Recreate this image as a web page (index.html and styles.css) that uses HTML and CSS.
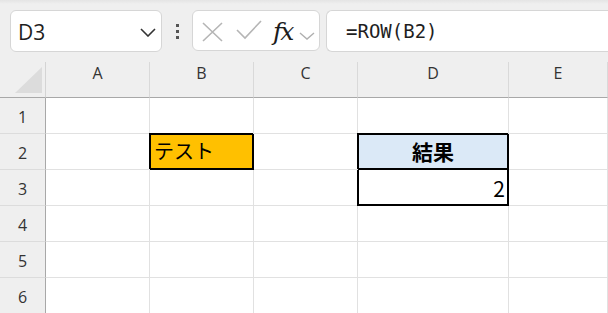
FILE: index.html
```html
<!DOCTYPE html>
<html lang="ja">
<head>
    <meta charset="UTF-8">
    <meta name="viewport" content="width=device-width, initial-scale=1.0">
    <title>ROW</title>
    <link rel="stylesheet" href="styles.css">
</head>
<body>
    <div class="toolbar">
        <div class="namebox">
            <span class="name">D3</span>
            <svg class="chev" width="16" height="9" viewBox="0 0 16 9"><polyline points="1,1 8,8 15,1" fill="none" stroke="#333" stroke-width="1.6"/></svg>
        </div>
        <div class="dots"><i></i><i></i><i></i></div>
        <div class="fx-tools">
            <svg class="icon-x" width="21" height="20" viewBox="0 0 21 20"><path d="M1 1 L20 19 M20 1 L1 19" stroke="#b5b5b5" stroke-width="1.6" fill="none"/></svg>
            <svg class="icon-ok" width="26" height="20" viewBox="0 0 26 20"><polyline points="1,10 9,18 25,1" fill="none" stroke="#b5b5b5" stroke-width="1.6"/></svg>
            <span class="fx">fx</span>
            <svg class="chev-sm" width="16" height="8" viewBox="0 0 16 8"><polyline points="1,1 8,7 15,1" fill="none" stroke="#b0b0b0" stroke-width="1.4"/></svg>
        </div>
        <div class="formula">=ROW(B2)</div>
    </div>

    <div class="sheet">
        <!-- header row -->
        <div class="cell corner"><svg width="27" height="26" viewBox="0 0 27 26"><polygon points="27,0 27,26 0,26" fill="#dcdcdc"/></svg></div>
        <div class="cell col-head">A</div>
        <div class="cell col-head">B</div>
        <div class="cell col-head">C</div>
        <div class="cell col-head">D</div>
        <div class="cell col-head">E</div>

        <div class="cell row-head">1</div>
        <div class="cell"></div><div class="cell"></div><div class="cell"></div><div class="cell"></div><div class="cell"></div>

        <div class="cell row-head">2</div>
        <div class="cell"></div>
        <div class="cell text boxed amber">テスト</div>
        <div class="cell"></div>
        <div class="cell text boxed blue">結果</div>
        <div class="cell"></div>

        <div class="cell row-head">3</div>
        <div class="cell"></div><div class="cell"></div><div class="cell"></div>
        <div class="cell text boxed-under num">2</div>
        <div class="cell"></div>

        <div class="cell row-head">4</div>
        <div class="cell"></div><div class="cell"></div><div class="cell"></div><div class="cell"></div><div class="cell"></div>

        <div class="cell row-head">5</div>
        <div class="cell"></div><div class="cell"></div><div class="cell"></div><div class="cell"></div><div class="cell"></div>

        <div class="cell row-head">6</div>
        <div class="cell"></div><div class="cell"></div><div class="cell"></div><div class="cell"></div><div class="cell"></div>
    </div>
</body>
</html>
```

FILE: styles.css
```css
* {
    box-sizing: border-box;
}

body {
    margin: 0;
    width: 608px;
    height: 313px;
    overflow: hidden;
    background: #efefef;
    font-family: "Open Sans", "Noto Sans", sans-serif;
    color: #222;
}

.toolbar {
    height: 62px;
    padding: 10px 0 0 10px;
    display: flex;
    align-items: flex-start;
    background: linear-gradient(#e4e4e4, #efefef 4px);
}

.toolbar > * {
    flex-shrink: 0;
}

.namebox {
    width: 152px;
    height: 42px;
    background: #fff;
    border: 1px solid #d6d6d6;
    border-radius: 6px;
    display: flex;
    align-items: center;
    padding: 0 5px 0 7px;
}

.name {
    flex: 1;
    font-size: 21px;
    color: #1f1f1f;
    padding-top: 1px;
}

.chev {
    margin-top: 2px;
}

.dots {
    width: 30px;
    height: 42px;
    display: flex;
    flex-direction: column;
    align-items: center;
    justify-content: center;
    gap: 3px;
}

.dots i {
    width: 3px;
    height: 3px;
    background: #555;
}

.fx-tools {
    width: 128px;
    height: 41px;
    background: #fff;
    border: 1px solid #d6d6d6;
    border-radius: 6px;
    display: flex;
    align-items: center;
    padding-left: 9px;
    margin-right: 6px;
}

.icon-x {
    margin-top: 2px;
}

.icon-ok {
    margin-left: 13px;
    margin-top: -2px;
}

.fx {
    font-family: "DejaVu Serif", serif;
    font-style: italic;
    font-size: 25px;
    color: #1c1c1c;
    margin-left: 11px;
    letter-spacing: -2px;
    margin-top: 1px;
}

.chev-sm {
    margin-left: 7px;
    margin-top: 10px;
}

.formula {
    flex: 1 0 0;
    height: 42px;
    background: #fff;
    border: 1px solid #d6d6d6;
    border-right: none;
    border-radius: 6px 0 0 6px;
    padding: 0 0 0 19px;
    font-family: "DejaVu Sans Mono", monospace;
    font-size: 19px;
    line-height: 40px;
    color: #1f1f1f;
}

.sheet {
    display: grid;
    grid-template-columns: 46px 104px 104px 104px 151px 1fr;
    grid-auto-rows: 36px;
    background: #fff;
}

.cell {
    border-right: 1px solid #e1e1e1;
    border-bottom: 1px solid #e1e1e1;
    display: flex;
    align-items: center;
}

.corner {
    background: #efefef;
    border-right: 1px solid #d4d4d4;
    border-bottom: 1px solid #a8a8a8;
    align-items: flex-end;
    justify-content: flex-end;
    padding: 0 3px 4px 0;
}

.col-head {
    background: #efefef;
    border-right: 1px solid #d9d9d9;
    border-bottom: 1px solid #a8a8a8;
    align-items: flex-start;
    justify-content: center;
    padding-top: 3px;
    font-size: 16px;
    line-height: 1;
    color: #333;
}

.row-head {
    background: #efefef;
    border-right: 1px solid #a8a8a8;
    border-bottom: 1px solid #dcdcdc;
    justify-content: center;
    padding-top: 2px;
    font-size: 16px;
    color: #333;
}

.text {
    font-family: "Noto Sans CJK JP", sans-serif;
    font-size: 20px;
    color: #000;
    white-space: nowrap;
}

.boxed {
    border-right-color: #000;
    border-bottom-color: #000;
    box-shadow: inset 0 0 0 1px #000, -1px -1px 0 0 #000;
}

.boxed-under {
    border-right-color: #000;
    border-bottom-color: #000;
    box-shadow: inset 1px 0 0 0 #000, inset -1px 0 0 0 #000, inset 0 -1px 0 0 #000, -1px 0 0 0 #000;
}

.amber {
    background: #ffc000;
    padding-left: 4px;
    padding-bottom: 3px;
}

.blue {
    background: #dbe9f7;
    justify-content: center;
    font-weight: bold;
    font-size: 21px;
    padding-bottom: 2px;
}

.num {
    justify-content: flex-end;
    padding-right: 3px;
    font-size: 21px;
}
```
